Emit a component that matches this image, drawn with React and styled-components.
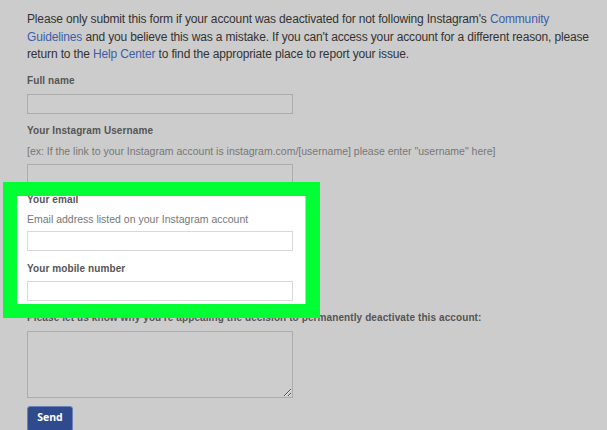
import styled, { createGlobalStyle } from 'styled-components';

const GlobalStyle = createGlobalStyle`
  html, body {
    margin: 0;
    padding: 0;
    background: #cccccc;
    overflow: hidden;
  }
`;

const Page = styled.main`
  width: 607px;
  height: 430px;
  padding: 11px 0 0 24px;
  box-sizing: border-box;
  font-family: 'Liberation Sans', Arial, sans-serif;
  color: #333;
`;

const Intro = styled.p`
  margin: 0 0 10px;
  width: 572px;
  padding-left: 3px;
  box-sizing: border-box;
  font-size: 12px;
  line-height: 17.5px;
  letter-spacing: -0.15px;
  color: #333;
`;

const Link = styled.a`
  color: #3d5fa8;
  text-decoration: none;
`;

const Form = styled.form`
  display: flex;
  flex-direction: column;
  gap: 10px;
  padding-left: 3px;
`;

const Field = styled.div`
  display: flex;
  flex-direction: column;
  gap: ${(p) => (p.$tight ? '5px' : '6px')};
  align-items: flex-start;
`;

const Label = styled.label`
  font-size: 10px;
  line-height: 14px;
  font-weight: bold;
  color: #555;
  letter-spacing: 0.1px;
`;

const Hint = styled.span`
  font-size: 10.5px;
  line-height: 14px;
  color: #777;
`;

const Input = styled.input`
  box-sizing: border-box;
  width: 266px;
  height: 20px;
  margin: 0;
  border: 1px solid ${(p) => (p.$light ? '#d8d8d8' : '#acacac')};
  background: ${(p) => (p.$light ? '#fff' : '#cdcdcd')};
  outline: none;
`;

const TextArea = styled.textarea`
  box-sizing: border-box;
  width: 266px;
  height: 67px;
  margin: 0;
  border: 1px solid #acacac;
  background: #cdcdcd;
  outline: none;
`;

const Highlight = styled.div`
  position: relative;
  display: flex;
  flex-direction: column;
  gap: 11px;
  margin-top: -1px;

  &::before {
    content: '';
    position: absolute;
    left: -10px;
    top: 3px;
    width: 288px;
    height: 108px;
    background: #fff;
    z-index: 0;
  }

  &::after {
    content: '';
    position: absolute;
    left: -24px;
    top: -11px;
    width: 317px;
    height: 136px;
    box-sizing: border-box;
    border: 14px solid #00ff33;
    z-index: 2;
  }

  & > * {
    position: relative;
    z-index: 1;
  }
`;

const SendButton = styled.button`
  align-self: flex-start;
  margin-top: -2px;
  width: 46px;
  height: 26px;
  padding: 0 0 3px;
  border: 1px solid #6a80b8;
  border-radius: 3px;
  background: #2f4b8e;
  color: #fff;
  font-family: 'Open Sans', 'Liberation Sans', sans-serif;
  font-size: 10.5px;
  font-weight: bold;
`;

const App = () => {
  return (
    <Page>
      <GlobalStyle />
      <Intro>
        Please only submit this form if your account was deactivated for not
        following Instagram's <Link href="#">Community Guidelines</Link> and
        you believe this was a mistake. If you can't access your account for a
        different reason, please return to the{' '}
        <Link href="#">Help Center</Link> to find the appropriate place to
        report your issue.
      </Intro>
      <Form>
        <Field>
          <Label>Full name</Label>
          <Input />
        </Field>
        <Field>
          <Label>Your Instagram Username</Label>
          <Hint>
            [ex: If the link to your Instagram account is
            instagram.com/[username] please enter "username" here]
          </Hint>
          <Input />
        </Field>
        <Highlight>
          <Field $tight>
            <Label>Your email</Label>
            <Hint>Email address listed on your Instagram account</Hint>
            <Input $light />
          </Field>
          <Field $tight>
            <Label>Your mobile number</Label>
            <Input $light />
          </Field>
        </Highlight>
        <Field>
          <Label>
            Please let us know why you're appealing the decision to
            permanently deactivate this account:
          </Label>
          <TextArea />
        </Field>
        <SendButton type="button">Send</SendButton>
      </Form>
    </Page>
  );
};

export default App;
